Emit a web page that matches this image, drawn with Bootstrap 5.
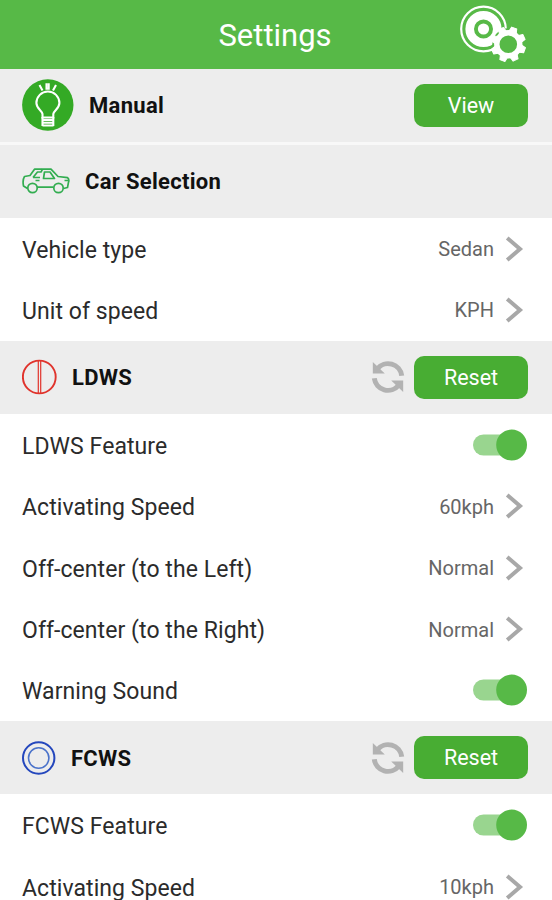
<!DOCTYPE html>
<html lang="en">
<head>
<meta charset="utf-8">
<meta name="viewport" content="width=device-width, initial-scale=1">
<title>Settings</title>
<link href="https://cdn.jsdelivr.net/npm/bootstrap@5.3.0/dist/css/bootstrap.min.css" rel="stylesheet">
<style>
html, body { height: 900px; overflow: hidden; }
body { font-family: Roboto, "Liberation Sans", sans-serif; color: #2b2b2b; background: #fff; }
svg { display: block; flex: none; }
.topbar { height: 68.5px; background: #57b947; color: #fff; padding: 0 24px 0 0; }
.topbar h1 { font-size: 31px; letter-spacing: 0; font-weight: 400; line-height: 1; padding-top: 3px; }
.side { flex: 0 0 70px; margin-left: 22px; }
.section-head { height: 73.3px; background: #ededed; padding: 0 24px 0 22px; color: #111; }
.section-head h2 { font-size: 22px; font-weight: 700; line-height: 1; letter-spacing: .3px; padding: 2px 0 0 15px; }
.section-head.split { border-bottom: 3px solid #f8f8f8; height: 76px; }
.btn-go, .btn-go:hover { width: 114px; height: 43px; padding: 1px 0 0; border: 0; border-radius: 10px; background: #48ad33; color: #fff; font-size: 21.5px; line-height: 42px; }
.sync { margin-right: 9px; }
.setting { height: 61.45px; padding: 0 25px 0 22px; font-size: 23px; line-height: 1; letter-spacing: .07px; }
.setting > span:first-child { padding-top: 3px; }
.setting .val { font-size: 20px; color: #666; letter-spacing: 0; }
.setting .val > span { padding-top: 1px; }
</style>
</head>
<body>
<header class="topbar d-flex align-items-center justify-content-between">
  <div class="side"></div>
  <h1 class="m-0">Settings</h1>
  <svg width="70" height="62" viewBox="458 3 70 62">
    <circle cx="483.5" cy="29" r="22.3" fill="none" stroke="#fff" stroke-width="2.2"/>
    <circle cx="483.5" cy="29" r="13.8" fill="none" stroke="#fff" stroke-width="8.6"/>
    <circle cx="483.5" cy="29" r="5.6" fill="#fff"/>
    <g transform="translate(508.3 44.3)">
      <circle r="16" fill="#57b947"/>
      <g id="teeth" fill="#fff" transform="rotate(20)" stroke="#fff" stroke-width="1" stroke-linejoin="round">
        <path id="tooth" d="M-3.7-13L-2.7-17.3H2.7L3.7-13z"/>
        <use href="#tooth" transform="rotate(45)"/><use href="#tooth" transform="rotate(90)"/><use href="#tooth" transform="rotate(135)"/><use href="#tooth" transform="rotate(180)"/><use href="#tooth" transform="rotate(225)"/><use href="#tooth" transform="rotate(270)"/><use href="#tooth" transform="rotate(315)"/>
      </g>
      <circle r="11.5" fill="none" stroke="#fff" stroke-width="5.4"/>
    </g>
  </svg>
</header>

<section class="section-head split d-flex align-items-center">
  <svg width="52" height="52" viewBox="0 0 52 52" fill="none" stroke="#fff" stroke-width="2.1">
    <circle cx="25.8" cy="26" r="25.7" fill="#34aa25" stroke="none"/>
    <path d="M20.5 38.5V35C20 31.5 14.4 29.5 14.4 24a11.5 11.5 0 0 1 23 0c0 5.500-5.600 7.500-6.100 11v3.500z"/>
    <path d="M20 41h12M20 43.800h12M20.500 46.500h11M20.500 38v9M31.300 38v9"/>
    <path d="M17.500 6l3 5.500M24.500 4.200v5.500h2.200V4.200M34 6l-3 5.500"/>
  </svg>
  <h2 class="m-0">Manual</h2>
  <button class="btn btn-go ms-auto" type="button">View</button>
</section>

<section>
  <div class="section-head d-flex align-items-center">
    <svg width="48" height="26" viewBox="0 0 48 26" fill="none" stroke="#32ad50" stroke-width="1.700" stroke-linejoin="round">
      <path d="M5.500 20.500L1.500 18C.8 14.500.9 11 2.500 8.500L8 7.500 12.500 1.200h16.500L36 8.500l9.500 1.200c1.600 1.500 1.600 3 1 4.500l-1 5.300-4 1"/>
      <path d="M15 19.200h16.500M11 9.500l4.500-5.500h4M11 9.500h7M22.500 4h5.500l4.500 6.500H21.500zM20.500 1.200l-1.500 3M13.500 12.500h4M42.500 12.500h3.500"/>
      <circle cx="10.500" cy="20" r="4.700"/><circle cx="36.500" cy="20" r="4.700"/>
    </svg>
    <h2 class="m-0">Car Selection</h2>
  </div>
  <div class="setting d-flex align-items-center justify-content-between"><span>Vehicle type</span><span class="val d-flex align-items-center"><span>Sedan</span><svg class="chev" width="33" height="28" viewBox="0 0 33 28"><path d="M13.200 3L26 14 13.200 25" fill="none" stroke="#a8a8a8" stroke-width="4"/></svg></span></div>
  <div class="setting d-flex align-items-center justify-content-between"><span>Unit of speed</span><span class="val d-flex align-items-center"><span>KPH</span><svg class="chev" width="33" height="28" viewBox="0 0 33 28"><path d="M13.200 3L26 14 13.200 25" fill="none" stroke="#a8a8a8" stroke-width="4"/></svg></span></div>
</section>

<section>
  <div class="section-head d-flex align-items-center">
    <svg width="35" height="36" viewBox="0 0 35 36" fill="none" stroke="#e0332c">
      <circle cx="17.300" cy="18" r="16.400" stroke-width="1.900"/><path d="M16.300 2v32M18.700 2v32" stroke-width="1.200"/>
    </svg>
    <h2 class="m-0">LDWS</h2>
    <svg class="ms-auto sync" width="34" height="34" viewBox="0 0 34 34">
      <g id="sync"><path d="M6.300 8.800A13.800 13.800 0 0 1 30.700 15.700" fill="none" stroke="#b2b2b2" stroke-width="5"/><path d="M1.800 2v11.500h12z" fill="#b2b2b2"/></g>
      <use href="#sync" transform="rotate(180 17 17)"/>
    </svg>
    <button class="btn btn-go" type="button">Reset</button>
  </div>
  <div class="setting d-flex align-items-center justify-content-between"><span>LDWS Feature</span><svg width="54" height="32" viewBox="0 0 54 32"><rect x="0" y="5.500" width="50" height="21" rx="10.500" fill="#99d58f"/><circle cx="38.600" cy="16" r="15.400" fill="#57b947"/></svg></div>
  <div class="setting d-flex align-items-center justify-content-between"><span>Activating Speed</span><span class="val d-flex align-items-center"><span>60kph</span><svg class="chev" width="33" height="28" viewBox="0 0 33 28"><path d="M13.200 3L26 14 13.200 25" fill="none" stroke="#a8a8a8" stroke-width="4"/></svg></span></div>
  <div class="setting d-flex align-items-center justify-content-between"><span>Off-center (to the Left)</span><span class="val d-flex align-items-center"><span>Normal</span><svg class="chev" width="33" height="28" viewBox="0 0 33 28"><path d="M13.200 3L26 14 13.200 25" fill="none" stroke="#a8a8a8" stroke-width="4"/></svg></span></div>
  <div class="setting d-flex align-items-center justify-content-between"><span>Off-center (to the Right)</span><span class="val d-flex align-items-center"><span>Normal</span><svg class="chev" width="33" height="28" viewBox="0 0 33 28"><path d="M13.200 3L26 14 13.200 25" fill="none" stroke="#a8a8a8" stroke-width="4"/></svg></span></div>
  <div class="setting d-flex align-items-center justify-content-between"><span>Warning Sound</span><svg width="54" height="32" viewBox="0 0 54 32"><rect x="0" y="5.500" width="50" height="21" rx="10.500" fill="#99d58f"/><circle cx="38.600" cy="16" r="15.400" fill="#57b947"/></svg></div>
</section>

<section>
  <div class="section-head d-flex align-items-center">
    <svg width="34" height="34" viewBox="0 0 34 34" fill="none" stroke="#2447bd">
      <circle cx="16.700" cy="17" r="15.700" stroke-width="2"/><circle cx="16.700" cy="17" r="10.200" stroke="#4a72ca" stroke-width="1.600"/>
    </svg>
    <h2 class="m-0">FCWS</h2>
    <svg class="ms-auto sync" width="34" height="34" viewBox="0 0 34 34"><use href="#sync"/><use href="#sync" transform="rotate(180 17 17)"/></svg>
    <button class="btn btn-go" type="button">Reset</button>
  </div>
  <div class="setting d-flex align-items-center justify-content-between"><span>FCWS Feature</span><svg width="54" height="32" viewBox="0 0 54 32"><rect x="0" y="5.500" width="50" height="21" rx="10.500" fill="#99d58f"/><circle cx="38.600" cy="16" r="15.400" fill="#57b947"/></svg></div>
  <div class="setting d-flex align-items-center justify-content-between"><span>Activating Speed</span><span class="val d-flex align-items-center"><span>10kph</span><svg class="chev" width="33" height="28" viewBox="0 0 33 28"><path d="M13.200 3L26 14 13.200 25" fill="none" stroke="#a8a8a8" stroke-width="4"/></svg></span></div>
</section>
<script src="https://cdn.jsdelivr.net/npm/bootstrap@5.3.0/dist/js/bootstrap.bundle.min.js"></script>
</body>
</html>
